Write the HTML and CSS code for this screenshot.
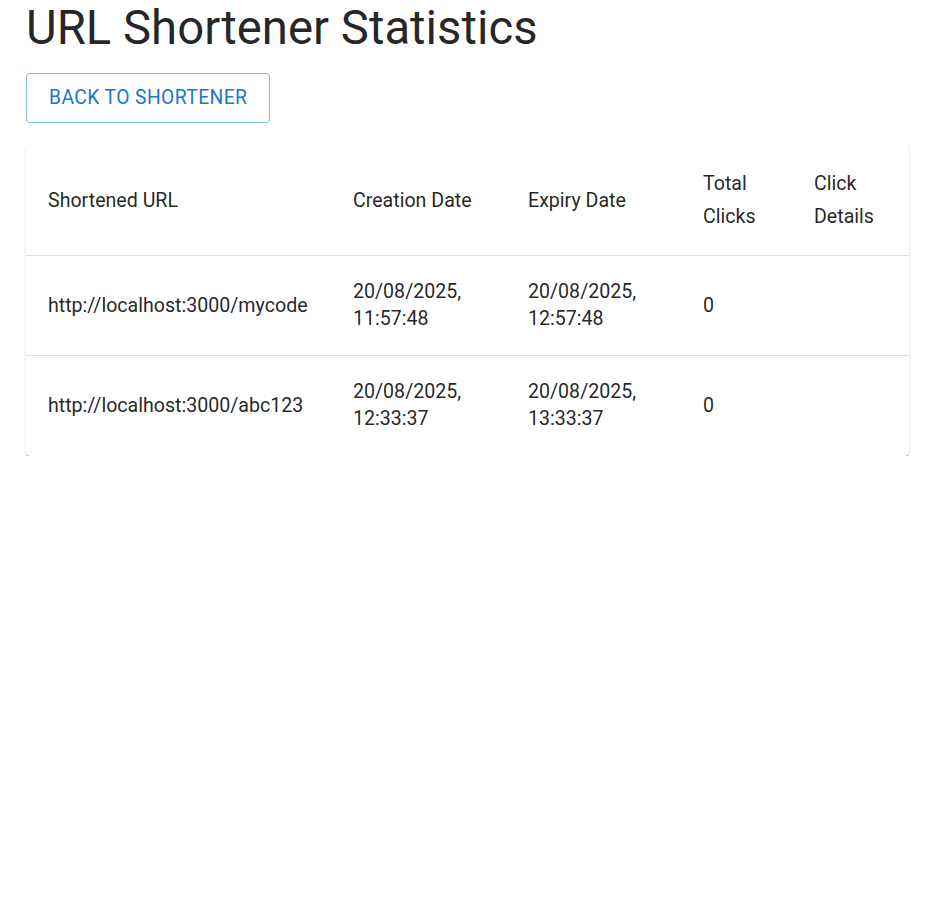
FILE: index.html
```html
<!DOCTYPE html>
<html lang="en">
<head>
<meta charset="utf-8">
<title>URL Shortener Statistics</title>
<link rel="stylesheet" href="styles.css">
</head>
<body>
<main class="container">
  <h1 class="title">URL Shortener Statistics</h1>
  <button class="btn-outlined" type="button">Back to Shortener</button>
  <div class="paper">
    <table class="table">
      <colgroup>
        <col class="c1"><col class="c2"><col class="c3"><col class="c4"><col class="c5">
      </colgroup>
      <thead>
        <tr>
          <th>Shortened URL</th>
          <th>Creation Date</th>
          <th>Expiry Date</th>
          <th>Total Clicks</th>
          <th>Click Details</th>
        </tr>
      </thead>
      <tbody>
        <tr>
          <td>http://localhost:3000/mycode</td>
          <td>20/08/2025, 11:57:48</td>
          <td>20/08/2025, 12:57:48</td>
          <td>0</td>
          <td></td>
        </tr>
        <tr>
          <td>http://localhost:3000/abc123</td>
          <td>20/08/2025, 12:33:37</td>
          <td>20/08/2025, 13:33:37</td>
          <td>0</td>
          <td></td>
        </tr>
      </tbody>
    </table>
  </div>
</main>
</body>
</html>
```

FILE: styles.css
```css
html, body {
  margin: 0;
  padding: 0;
  background: #ffffff;
}
body {
  font-family: Roboto, "Liberation Sans", Arial, sans-serif;
  color: rgba(0, 0, 0, 0.87);
}
.container {
  padding: 0 28px 0 26px;
}
.title {
  margin: 0 0 17px 0;
  font-size: 47.3px;
  font-weight: 400;
  line-height: 56px;
  color: rgba(0, 0, 0, 0.87);
}
.btn-outlined {
  display: block;
  height: 50px;
  padding: 0 22px 2px 22px;
  font-family: Roboto, "Liberation Sans", Arial, sans-serif;
  font-size: 19.3px;
  font-weight: 400;
  letter-spacing: 0.4px;
  text-transform: uppercase;
  color: #1976d2;
  background: transparent;
  border: 1px solid rgba(25, 118, 210, 0.5);
  border-radius: 4px;
  cursor: pointer;
}
.paper {
  margin-top: 22px;
  background: #fff;
  border-radius: 4px;
  box-shadow: 0 2px 1px -1px rgba(0,0,0,0.45), 0 1px 1px 0 rgba(0,0,0,0.16), 0 1px 3px 0 rgba(0,0,0,0.12);
  overflow: hidden;
}
.table {
  width: 100%;
  border-collapse: separate;
  border-spacing: 0;
  table-layout: fixed;
}
.c1 { width: 305px; }
.c2 { width: 175px; }
.c3 { width: 175px; }
.c4 { width: 111px; }
.c5 { width: auto; }
th, td {
  text-align: left;
  vertical-align: middle;
  font-size: 19.6px;
  font-weight: 400;
  color: rgba(0, 0, 0, 0.87);
}
th {
  line-height: 33px;
  padding: 22px 22px 22px 22px;
  border-bottom: 1px solid #e0e0e0;
}
td {
  line-height: 27px;
  padding: 22px 22px 24px 22px;
}
tbody tr:not(:last-child) td {
  padding-bottom: 23px;
  border-bottom: 1px solid #e0e0e0;
}
```
